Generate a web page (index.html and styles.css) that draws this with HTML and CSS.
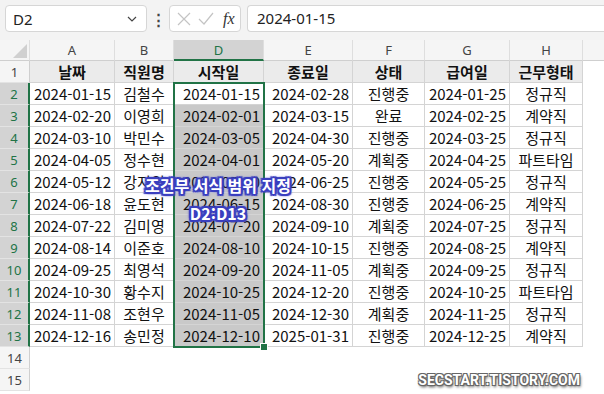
FILE: index.html
```html
<!DOCTYPE html>
<html lang="ko">
<head>
	<meta charset="utf-8">
	<title>조건부 서식</title>
	<link rel="stylesheet" href="styles.css">
</head>
<body>
	<div class="formula-bar">
		<div class="name-box">
			<span>D2</span>
			<svg class="chevron" width="10" height="6" viewBox="0 0 10 6"><path d="M1 1 L5 5 L9 1" fill="none" stroke="#444" stroke-width="1.2"/></svg>
		</div>
		<div class="dots">⋮</div>
		<div class="fx-box">
			<svg width="14" height="14" viewBox="0 0 14 14"><path d="M1 1 L13 13 M13 1 L1 13" stroke="#c4c4c4" stroke-width="1.2"/></svg>
			<svg width="16" height="14" viewBox="0 0 16 14"><path d="M1 7 L6 12 L15 1" fill="none" stroke="#c4c4c4" stroke-width="1.2"/></svg>
			<span class="fx">fx</span>
		</div>
		<div class="formula-input">2024-01-15</div>
	</div>

	<div class="sheet">
		<table class="grid">
			<colgroup>
				<col class="c-row"><col class="c-a"><col class="c-b"><col class="c-d"><col class="c-e"><col class="c-f"><col class="c-g"><col class="c-h"><col class="c-i">
			</colgroup>
			<tr class="col-heads">
				<th class="corner"><svg width="14" height="14" viewBox="0 0 14 14"><path d="M14 0 L14 14 L0 14 Z" fill="#d0d0d0"/></svg></th>
				<th>A</th><th>B</th><th class="sel">D</th><th>E</th><th>F</th><th>G</th><th>H</th><th class="last">I</th>
			</tr>
			<tr class="title-row">
				<th class="rh">1</th>
				<td>날짜</td><td>직원명</td><td>시작일</td><td>종료일</td><td>상태</td><td>급여일</td><td>근무형태</td><td class="empty"></td>
			</tr>
			<tr>
				<th class="rh on">2</th>
				<td class="dt">2024-01-15</td><td>김철수</td><td class="dt active">2024-01-15</td><td class="dt">2024-02-28</td><td>진행중</td><td class="dt">2024-01-25</td><td>정규직</td><td class="empty"></td>
			</tr>
			<tr>
				<th class="rh on">3</th>
				<td class="dt">2024-02-20</td><td>이영희</td><td class="dt pick">2024-02-01</td><td class="dt">2024-03-15</td><td>완료</td><td class="dt">2024-02-25</td><td>계약직</td><td class="empty"></td>
			</tr>
			<tr>
				<th class="rh on">4</th>
				<td class="dt">2024-03-10</td><td>박민수</td><td class="dt pick">2024-03-05</td><td class="dt">2024-04-30</td><td>진행중</td><td class="dt">2024-03-25</td><td>정규직</td><td class="empty"></td>
			</tr>
			<tr>
				<th class="rh on">5</th>
				<td class="dt">2024-04-05</td><td>정수현</td><td class="dt pick">2024-04-01</td><td class="dt">2024-05-20</td><td>계획중</td><td class="dt">2024-04-25</td><td>파트타임</td><td class="empty"></td>
			</tr>
			<tr>
				<th class="rh on">6</th>
				<td class="dt">2024-05-12</td><td>강지원</td><td class="dt pick">2024-05-10</td><td class="dt">2024-06-25</td><td>진행중</td><td class="dt">2024-05-25</td><td>정규직</td><td class="empty"></td>
			</tr>
			<tr>
				<th class="rh on">7</th>
				<td class="dt">2024-06-18</td><td>윤도현</td><td class="dt pick">2024-06-15</td><td class="dt">2024-08-30</td><td>진행중</td><td class="dt">2024-06-25</td><td>계약직</td><td class="empty"></td>
			</tr>
			<tr>
				<th class="rh on">8</th>
				<td class="dt">2024-07-22</td><td>김미영</td><td class="dt pick">2024-07-20</td><td class="dt">2024-09-10</td><td>계획중</td><td class="dt">2024-07-25</td><td>정규직</td><td class="empty"></td>
			</tr>
			<tr>
				<th class="rh on">9</th>
				<td class="dt">2024-08-14</td><td>이준호</td><td class="dt pick">2024-08-10</td><td class="dt">2024-10-15</td><td>진행중</td><td class="dt">2024-08-25</td><td>계약직</td><td class="empty"></td>
			</tr>
			<tr>
				<th class="rh on">10</th>
				<td class="dt">2024-09-25</td><td>최영석</td><td class="dt pick">2024-09-20</td><td class="dt">2024-11-05</td><td>계획중</td><td class="dt">2024-09-25</td><td>정규직</td><td class="empty"></td>
			</tr>
			<tr>
				<th class="rh on">11</th>
				<td class="dt">2024-10-30</td><td>황수지</td><td class="dt pick">2024-10-25</td><td class="dt">2024-12-20</td><td>진행중</td><td class="dt">2024-10-25</td><td>파트타임</td><td class="empty"></td>
			</tr>
			<tr>
				<th class="rh on">12</th>
				<td class="dt">2024-11-08</td><td>조현우</td><td class="dt pick">2024-11-05</td><td class="dt">2024-12-30</td><td>계획중</td><td class="dt">2024-11-25</td><td>정규직</td><td class="empty"></td>
			</tr>
			<tr>
				<th class="rh on">13</th>
				<td class="dt">2024-12-16</td><td>송민정</td><td class="dt pick">2024-12-10</td><td class="dt">2025-01-31</td><td>진행중</td><td class="dt">2024-12-25</td><td>계약직</td><td class="empty"></td>
			</tr>
			<tr class="blank">
				<th class="rh">14</th>
				<td></td><td></td><td></td><td></td><td></td><td></td><td></td><td></td>
			</tr>
			<tr class="blank">
				<th class="rh">15</th>
				<td></td><td></td><td></td><td></td><td></td><td></td><td></td><td></td>
			</tr>
		</table>

		<!-- selection box over D2:D13 -->
		<div class="selection"><span class="handle"></span></div>

		<div class="caption">
			<div>조건부 서식 범위 지정</div>
			<div>D2:D13</div>
		</div>

		<div class="watermark">SECSTART.TISTORY.COM</div>
	</div>
</body>
</html>
```

FILE: styles.css
```css
body {
	margin: 0;
	width: 604px;
	height: 394px;
	overflow: hidden;
	background: #ffffff;
	font-family: "Noto Sans CJK KR", "Noto Sans", sans-serif;
}

.formula-bar {
	height: 40px;
	background: #f3f3f3;
	display: flex;
	align-items: flex-start;
	padding: 5px 0 0 5px;
	box-sizing: border-box;
}

.name-box {
	width: 142px;
	height: 27px;
	box-sizing: border-box;
	background: #fff;
	border: 1px solid #d6d6d6;
	border-radius: 4px;
	display: flex;
	align-items: center;
	justify-content: space-between;
	padding: 0 9px 0 7px;
	font-family: "Noto Sans", sans-serif;
	font-size: 15px;
	color: #222;
}

.dots {
	width: 22px;
	text-align: center;
	font-size: 15px;
	line-height: 27px;
	color: #444;
	font-weight: bold;
}

.fx-box {
	width: 72px;
	height: 27px;
	box-sizing: border-box;
	background: #fff;
	border: 1px solid #d6d6d6;
	border-radius: 4px;
	display: flex;
	align-items: center;
	gap: 7px;
	padding-left: 7px;
}

.fx {
	font-family: "Liberation Serif", serif;
	font-style: italic;
	font-size: 16px;
	color: #333;
	margin-left: 2px;
}

.formula-input {
	flex: 1;
	margin-left: 6px;
	height: 27px;
	box-sizing: border-box;
	background: #fff;
	border: 1px solid #d6d6d6;
	border-right: none;
	border-radius: 4px 0 0 4px;
	padding-left: 9px;
	font-family: "Noto Sans", sans-serif;
	font-size: 15px;
	line-height: 25px;
	color: #222;
}

.sheet {
	position: relative;
}

.grid {
	table-layout: fixed;
	border-collapse: separate;
	border-spacing: 0;
	width: 634px;
}

.c-row { width: 30px; }
.c-a { width: 85px; }
.c-b { width: 59px; }
.c-d { width: 90px; }
.c-e { width: 89px; }
.c-f { width: 72px; }
.c-g { width: 85px; }
.c-h { width: 73px; }
.c-i { width: 51px; }

.grid th,
.grid td {
	padding: 0;
	overflow: hidden;
	white-space: nowrap;
}

.col-heads th {
	height: 20px;
	background: #f5f5f5;
	border-right: 1px solid #dedede;
	border-bottom: 1px solid #cfcfcf;
	font-family: "Noto Sans", sans-serif;
	font-weight: normal;
	font-size: 13px;
	color: #444;
}

.col-heads th.sel {
	background: #d3d3d3;
	color: #217346;
	height: 19px;
	border-bottom: 2px solid #217346;
}

.col-heads th.corner {
	text-align: right;
	vertical-align: bottom;
	line-height: 0;
}

.corner svg {
	margin: 0 2px 2px 0;
}

.rh {
	height: 21px;
	background: #f5f5f5;
	border-right: 1px solid #cfcfcf;
	border-bottom: 1px solid #e3e3e3;
	font-family: "Noto Sans", sans-serif;
	font-weight: normal;
	font-size: 13px;
	color: #444;
}

.rh.on {
	background: #d3d3d3;
	color: #217346;
	border-right: 2px solid #217346;
}

.grid td {
	height: 21px;
	border-right: 1px solid #d4d4d4;
	border-bottom: 1px solid #d4d4d4;
	text-align: center;
	font-size: 15px;
	line-height: 21px;
	color: #111;
}

.grid td.dt {
	text-align: right;
	padding-right: 3px;
}

.grid td.pick {
	background: #c9c9c9;
}

.title-row td {
	background: #ebebeb;
	font-weight: bold;
}

.grid td.empty,
.title-row td.empty,
.blank td {
	background: #fff;
	border-color: transparent;
}

.selection {
	position: absolute;
	left: 173px;
	top: 42px;
	width: 88px;
	height: 262px;
	border: 2px solid #217346;
}

.handle {
	position: absolute;
	right: -5px;
	bottom: -5px;
	width: 6px;
	height: 6px;
	background: #217346;
	border: 1px solid #fff;
}

.caption {
	position: absolute;
	left: 118px;
	top: 131px;
	width: 200px;
	text-align: center;
	font-family: "Noto Sans CJK KR", sans-serif;
	font-weight: bold;
	font-size: 16px;
	line-height: 28px;
	color: #fff;
	text-shadow:
		2px 0 0 #3a3fbf, -2px 0 0 #3a3fbf, 0 2px 0 #3a3fbf, 0 -2px 0 #3a3fbf,
		1px 1px 0 #3a3fbf, -1px -1px 0 #3a3fbf, 1px -1px 0 #3a3fbf, -1px 1px 0 #3a3fbf,
		2px 2px 1px #3a3fbf, -2px -2px 1px #3a3fbf, 2px -2px 1px #3a3fbf, -2px 2px 1px #3a3fbf,
		0 0 5px #6a6fe0;
}

.watermark {
	position: absolute;
	right: 24px;
	top: 332px;
	font-family: "Roboto", sans-serif;
	font-weight: bold;
	font-size: 14px;
	letter-spacing: 0;
	color: #fff;
	text-shadow:
		1px 1px 0 #666, -1px -1px 0 #666, 1px -1px 0 #666, -1px 1px 0 #666,
		1px 2px 3px #333;
}
```
